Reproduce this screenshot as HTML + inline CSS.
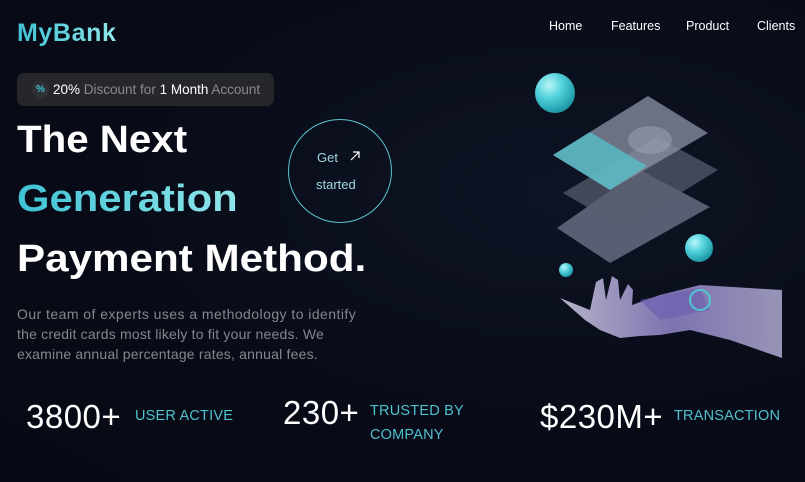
<!DOCTYPE html>
<html><head><meta charset="utf-8"><style>
*{margin:0;padding:0;box-sizing:border-box}
body{width:805px;height:482px;overflow:hidden;background:radial-gradient(ellipse at 70% 40%,#0e1424 0%,#080b17 60%,#070914 100%);font-family:"Liberation Sans",sans-serif;color:#fff;position:relative}
.abs{position:absolute;white-space:nowrap}
.logo{left:17px;top:19px;font-size:25px;font-weight:bold;background:linear-gradient(90deg,#3fc3d4,#8ee6ea);-webkit-background-clip:text;color:transparent;letter-spacing:0.6px}
.nav{top:19px;font-size:12.5px;color:#fff}
.badge{left:17px;top:73px;width:257px;height:33px;background:#26272b;border-radius:7px}
.badge .ic{position:absolute;left:15px;top:8px;width:17px;height:17px;border-radius:50%;background:#2f3033;color:#3fc3d4;font-size:10px;text-align:center;line-height:17px;font-weight:bold}
.badge .t{position:absolute;left:36px;top:9px;font-size:13.5px;color:#8a8a8e}
.badge b{color:#fff;font-weight:normal}
.h{left:17px;font-size:38px;font-weight:bold;transform-origin:0 0}
.gen{background:linear-gradient(90deg,#3fc3d4,#90e6ea);-webkit-background-clip:text;color:transparent}
.circle{left:288px;top:119px;width:104px;height:104px;border:1.5px solid #56c4cf;border-radius:50%}
.p{left:17px;top:304px;font-size:14px;line-height:20px;color:#85868d}
.num{font-size:33px;color:#fff;letter-spacing:0.5px}
.lab{font-size:14.5px;color:#4fc1cd;letter-spacing:0.2px}
</style></head><body>
<div class="abs logo">MyBank</div>
<div class="abs nav" style="left:549px">Home</div>
<div class="abs nav" style="left:611px">Features</div>
<div class="abs nav" style="left:686px">Product</div>
<div class="abs nav" style="left:757px">Clients</div>
<div class="abs badge"><div class="ic">%</div><div class="t"><b>20%</b> Discount for <b>1 Month</b> Account</div></div>
<div class="abs h" style="top:119px;transform:scaleX(1.06)">The Next</div>
<div class="abs h gen" style="top:178px;transform:scaleX(1.1)">Generation</div>
<div class="abs h" style="top:238px;transform:scaleX(1.11)">Payment Method.</div>
<div class="abs circle"></div>
<div class="abs" style="left:317px;top:150px;font-size:13px;color:#9fd6dc">Get</div>
<svg class="abs" style="left:349px;top:150px" width="12" height="12" viewBox="0 0 12 12"><path d="M2 10L10 2M4 2H10V8" stroke="#fff" stroke-width="1.2" fill="none"/></svg>
<div class="abs" style="left:316px;top:177px;font-size:13px;color:#9fd6dc">started</div>
<div class="abs p" style="letter-spacing:0.45px">Our team of experts uses a methodology to identify</div>
<div class="abs p" style="top:324px;letter-spacing:0.2px">the credit cards most likely to fit your needs. We</div>
<div class="abs p" style="top:344px;letter-spacing:0.2px">examine annual percentage rates, annual fees.</div>
<div class="abs num" style="left:26px;top:398px">3800+</div>
<div class="abs lab" style="left:135px;top:408px">USER ACTIVE</div>
<div class="abs num" style="left:283px;top:394px">230+</div>
<div class="abs lab" style="left:370px;top:403px">TRUSTED BY</div>
<div class="abs lab" style="left:370px;top:427px">COMPANY</div>
<div class="abs num" style="left:540px;top:398px">$230M+</div>
<div class="abs lab" style="left:674px;top:408px">TRANSACTION</div>
<svg class="abs" style="left:500px;top:60px" width="305" height="310" viewBox="500 60 305 310">
<defs>
<radialGradient id="sp" cx="35%" cy="30%" r="70%"><stop offset="0" stop-color="#b8f6f8"/><stop offset="0.5" stop-color="#4fd0da"/><stop offset="1" stop-color="#1f9aa8"/></radialGradient>
<linearGradient id="arm" x1="0" y1="0" x2="1" y2="0"><stop offset="0" stop-color="#c9c6dc"/><stop offset="0.5" stop-color="#8a7fc0"/><stop offset="1" stop-color="#a7a3c8"/></linearGradient>
</defs>
<polygon points="557,228 640,170 710,207 610,263" fill="#8a93a8" fill-opacity="0.6"/>
<polygon points="563,193 657,137 718,170 623,228" fill="#5a6070" fill-opacity="0.7"/>
<polygon points="553,155 648,96 708,133 610,190" fill="#8b93a6" fill-opacity="0.75"/>
<polygon points="553,155 590,132 647,166 610,190" fill="#54c3cc" fill-opacity="0.75"/>
<ellipse cx="650" cy="140" rx="22" ry="14" fill="#a0a6b6" opacity="0.5"/>
<circle cx="555" cy="93" r="20" fill="url(#sp)"/>
<circle cx="699" cy="248" r="14" fill="url(#sp)"/>
<circle cx="566" cy="270" r="7" fill="url(#sp)"/>
<path d="M560,298 L590,310 L596,282 L603,278 L606,300 L612,276 L618,280 L620,300 L628,284 L633,290 L632,305 L660,295 L700,285 L782,290 L782,358 L730,340 L690,330 L660,335 L640,336 L620,338 L600,330 L585,320 Z" fill="url(#arm)" opacity="0.9"/>
<path d="M640,300 L700,288 L710,310 L660,320 Z" fill="#6a5bb0" opacity="0.6"/>
<circle cx="700" cy="300" r="10" fill="none" stroke="#4fc8d2" stroke-width="2"/>
</svg>
</body></html>
